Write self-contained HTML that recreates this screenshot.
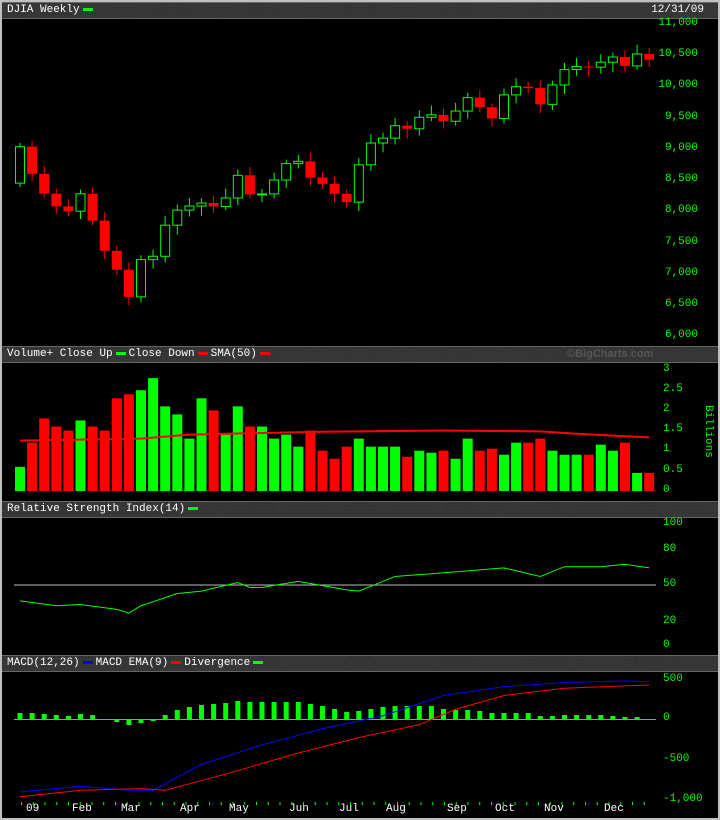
<!DOCTYPE html>
<html><head><meta charset="utf-8"><style>
html,body{margin:0;padding:0;background:#000;}
#w{position:relative;width:720px;height:820px;background:#000;overflow:hidden;font-family:"Liberation Mono","DejaVu Sans Mono",monospace;}
.frame{position:absolute;left:0;top:0;width:716px;height:816px;border:2px solid #c0c0c0;}
.hb{position:absolute;left:2px;width:716px;height:15px;background-color:#2a2a2a;background-image:repeating-linear-gradient(45deg,#3a3a3a 0 1px,transparent 1px 2px),repeating-linear-gradient(-45deg,#3a3a3a 0 1px,transparent 1px 2px);border-top:1px solid #666;border-bottom:1px solid #666;color:#fff;font-size:11px;line-height:15px;}
.hb span{position:absolute;top:0;white-space:nowrap;}
.sw{display:inline-block;width:10px;height:3px;vertical-align:middle;margin:0 3px;}
.lb{position:absolute;color:#0f0;font-size:11px;text-align:right;width:60px;}
.ll{position:absolute;color:#0f0;font-size:11px;left:663px;}
.xl{position:absolute;top:803px;color:#fff;font-size:11px;}
svg{position:absolute;left:0;top:0;}
</style></head><body><div id="w">
<svg id="s" width="720" height="820"></svg>
<div class="frame"></div>
<div class="hb" style="top:2px"><span style="left:5px">DJIA Weekly<i class="sw" style="background:#0f0"></i></span><span style="right:14px">12/31/09</span></div>
<div class="hb" style="top:346px"><span style="left:5px">Volume+ Close Up<i class="sw" style="background:#0f0"></i>Close Down<i class="sw" style="background:#f00"></i>SMA(50)<i class="sw" style="background:#f00"></i></span><span style="left:565px;color:#555;font-weight:bold;font-family:'Liberation Sans',sans-serif">©BigCharts.com</span></div>
<div class="hb" style="top:501px"><span style="left:5px">Relative Strength Index(14)<i class="sw" style="background:#0f0"></i></span></div>
<div class="hb" style="top:655px"><span style="left:5px">MACD(12,26)<i class="sw" style="background:#00f"></i>MACD EMA(9)<i class="sw" style="background:#f00"></i>Divergence<i class="sw" style="background:#0f0"></i></span></div>
<div class="lb" style="left:638px;top:17px">11,000</div>
<div class="lb" style="left:638px;top:48px">10,500</div>
<div class="lb" style="left:638px;top:79px">10,000</div>
<div class="lb" style="left:638px;top:111px">9,500</div>
<div class="lb" style="left:638px;top:142px">9,000</div>
<div class="lb" style="left:638px;top:173px">8,500</div>
<div class="lb" style="left:638px;top:204px">8,000</div>
<div class="lb" style="left:638px;top:236px">7,500</div>
<div class="lb" style="left:638px;top:267px">7,000</div>
<div class="lb" style="left:638px;top:298px">6,500</div>
<div class="lb" style="left:638px;top:329px">6,000</div>
<div class="ll" style="top:363px">3</div>
<div class="ll" style="top:383px">2.5</div>
<div class="ll" style="top:403px">2</div>
<div class="ll" style="top:423px">1.5</div>
<div class="ll" style="top:443px">1</div>
<div class="ll" style="top:464px">0.5</div>
<div class="ll" style="top:484px">0</div>
<div style="position:absolute;left:702px;top:405px;color:#0f0;font-size:11px;writing-mode:vertical-rl;">Billions</div>
<div class="ll" style="top:517px">100</div>
<div class="ll" style="top:543px">80</div>
<div class="ll" style="top:578px">50</div>
<div class="ll" style="top:615px">20</div>
<div class="ll" style="top:639px">0</div>
<div class="ll" style="top:673px">500</div>
<div class="ll" style="top:712px">0</div>
<div class="ll" style="top:753px">-500</div>
<div class="ll" style="top:793px">-1,000</div>
<div class="xl" style="left:26px">09</div><div class="xl" style="left:72px">Feb</div><div class="xl" style="left:121px">Mar</div><div class="xl" style="left:180px">Apr</div><div class="xl" style="left:229px">May</div><div class="xl" style="left:289px">Jun</div><div class="xl" style="left:339px">Jul</div><div class="xl" style="left:386px">Aug</div><div class="xl" style="left:447px">Sep</div><div class="xl" style="left:495px">Oct</div><div class="xl" style="left:544px">Nov</div><div class="xl" style="left:604px">Dec</div>
</div>
<script>
var S=document.getElementById('s'),h='';
var C=[9034,8599,8281,8077,8000,8280,7850,7365,7062,6627,7224,7278,7776,8017,8083,8131,8076,8212,8575,8268,8277,8500,8763,8799,8539,8438,8280,8146,8743,9093,9171,9370,9321,9505,9544,9441,9605,9820,9665,9487,9864,9995,9972,9712,10023,10270,10318,10309,10388,10471,10328,10520,10428];
var V=[0.6,1.2,1.8,1.6,1.5,1.75,1.6,1.5,2.3,2.4,2.5,2.8,2.1,1.9,1.3,2.3,2.0,1.4,2.1,1.6,1.6,1.3,1.4,1.1,1.5,1.0,0.8,1.1,1.3,1.1,1.1,1.1,0.85,1.0,0.95,1.0,0.8,1.3,1.0,1.05,0.9,1.2,1.2,1.3,1.0,0.9,0.9,0.9,1.15,1.0,1.2,0.45,0.45];
var D=[7,7,6,5,4,6,5,-1,-3,-6,-4,-2,5,10,13,15,16,17,19,18,18,18,18,18,16,14,11,8,9,11,13,14,14,14,14,11,10,10,9,7,7,7,7,4,4,5,5,5,5,4,3,3,1];
function X(i){return 20+i*12.1;}
function Y(p){return 24+(11000-p)*0.0624;}
function K(k,i){for(var j=0;j<k.length-1;j++){if(i>=k[j][0]&&i<=k[j+1][0]){var t=(i-k[j][0])/(k[j+1][0]-k[j][0]);return k[j][1]+t*(k[j+1][1]-k[j][1]);}}return k[k.length-1][1];}
for(var i=0;i<53;i++){var o=i?C[i-1]:8450,c=C[i],up=c>=o,x=X(i);
var hi=Math.max(o,c)+60+(i*37%90),lo=Math.min(o,c)-60-(i*53%100);
var col=up?'#0f0':'#f00';
h+='<line x1="'+x+'" x2="'+x+'" y1="'+Y(hi)+'" y2="'+Y(lo)+'" stroke="'+col+'"/>';
var t=Y(Math.max(o,c)),b=Y(Math.min(o,c));if(b-t<1)b=t+1;
if(up)h+='<rect x="'+(x-4.5)+'" y="'+t+'" width="9" height="'+(b-t)+'" fill="#000" stroke="#0f0"/>';
else h+='<rect x="'+(x-5)+'" y="'+t+'" width="10" height="'+(b-t)+'" fill="#f00"/>';
h+='<rect x="'+(x-5)+'" y="'+(491-V[i]*40.3)+'" width="10" height="'+(V[i]*40.3)+'" fill="'+col+'"/>';
}
var sm='';for(var i=0;i<53;i++){sm+=(i?'L':'M')+X(i)+' '+(491-40.3*K([[0,1.25],[10,1.3],[14,1.4],[25,1.47],[35,1.5],[43,1.48],[46,1.42],[52,1.33]],i));}
h+='<path d="'+sm+'" stroke="#f00" stroke-width="2" fill="none"/>';
h+='<line x1="14" x2="656" y1="585" y2="585" stroke="#bbb"/>';
var r='';for(var i=0;i<53;i++){r+=(i?'L':'M')+X(i)+' '+(646-1.22*K([[0,37],[3,33],[5,34],[8,30],[9,27],[10,33],[13,43],[15,45],[18,52],[19,48],[20,48],[23,53],[27,46],[28,45],[31,57],[35,60],[40,64],[43,57],[45,65],[48,65],[50,67],[52,64]],i));}
h+='<path d="'+r+'" stroke="#0f0" fill="none"/>';
var bk=[[0,-900],[5,-830],[9,-880],[11,-880],[15,-560],[20,-320],[25,-120],[30,40],[35,290],[40,400],[45,450],[50,470],[52,460]];
var rk=[[0,-960],[5,-880],[10,-860],[12,-880],[17,-680],[23,-420],[28,-230],[33,-70],[36,120],[40,290],[45,380],[52,420]];
var b2='',r2='';
h+='<line x1="14" x2="656" y1="719.5" y2="719.5" stroke="#0f0"/>';
for(var i=0;i<53;i++){var bv=K(bk,i),rv=K(rk,i),x=X(i),d=D[i];
if(d>=0)h+='<rect x="'+(x-2.5)+'" y="'+(720-d)+'" width="5" height="'+d+'" fill="#0f0"/>';
else h+='<rect x="'+(x-2.5)+'" y="719" width="5" height="'+(-d)+'" fill="#0f0"/>';
b2+=(i?'L':'M')+x+' '+(719-bv*0.081);r2+=(i?'L':'M')+x+' '+(719-rv*0.081);}
h+='<path d="'+b2+'" stroke="#00f" fill="none"/><path d="'+r2+'" stroke="#f00" fill="none"/>';
for(var x=21;x<655;x+=11.75)h+='<rect x="'+x+'" y="802" width="1" height="3" fill="#0f0"/>';
S.innerHTML=h;
</script>
</body></html>
